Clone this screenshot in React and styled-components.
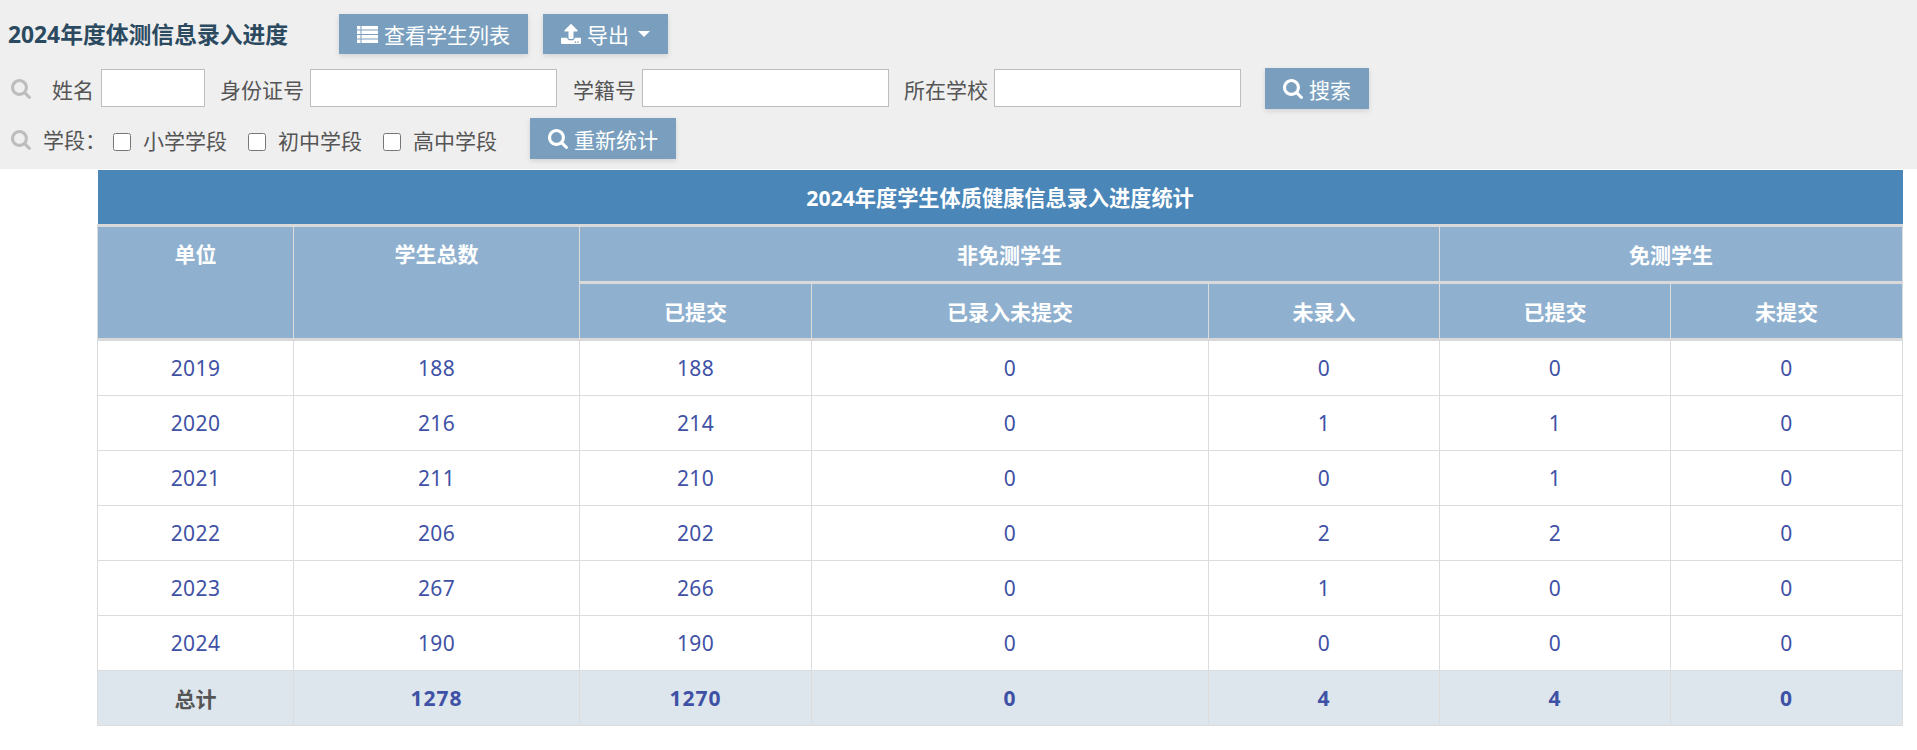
import React from "react";
import styled, { createGlobalStyle } from "styled-components";
import { FaUpload } from "react-icons/fa";

const FONT = `"Noto Sans", "Noto Sans CJK SC", sans-serif`;

const Global = createGlobalStyle`
  html, body { margin: 0; padding: 0; background: #fff; }
  body { font-family: ${FONT}; color: #555; }
  * { box-sizing: border-box; }
`;

const Toolbar = styled.header`
  background: #efefef;
  height: 169px;
  padding: 14px 0 0 8px;
  display: flex;
  flex-direction: column;
`;

const Row = styled.div`
  display: flex;
  align-items: center;
  height: ${(p) => p.$h}px;
  margin-bottom: ${(p) => p.$mb}px;
`;

const Title = styled.h1`
  margin: 0 51px 2px 0;
  width: 280px;
  font-size: 22.8px;
  font-weight: 700;
  color: #2b4a5f;
  white-space: nowrap;
`;

const Button = styled.button`
  display: inline-flex;
  align-items: center;
  height: ${(p) => p.$h || 41}px;
  padding: 0 18px;
  margin-left: ${(p) => p.$ml || 0}px;
  border: 0;
  background: #7a9fbe;
  color: #fff;
  font-family: ${FONT};
  font-size: 21px;
  box-shadow: 0 2px 5px rgba(0, 0, 0, 0.12);
  white-space: nowrap;
  svg { margin-right: 6px; flex: none; }
`;

const Caret = styled.span`
  width: 0;
  height: 0;
  margin-left: 9px;
  border-left: 6px solid transparent;
  border-right: 6px solid transparent;
  border-top: 6px solid #fff;
`;

const RowIconWrap = styled.span`
  display: inline-flex;
  color: #bdbdbd;
  margin: ${(p) => p.$mt || 0}px 0 0 3px;
  flex: none;
`;

const Label = styled.label`
  font-size: 21px;
  color: #555;
  white-space: nowrap;
  margin: ${(p) => p.$mt || 0}px ${(p) => p.$mr || 0}px 0 ${(p) => p.$ml}px;
`;

const TextInput = styled.input`
  width: ${(p) => p.$w}px;
  height: 38px;
  margin-bottom: 2px;
  border: 1px solid #bdbdbd;
  background: #fff;
  padding: 0 6px;
  outline: none;
`;

const Check = styled.input`
  width: 18px;
  height: 18px;
  margin: 6px 12px 0 ${(p) => p.$ml}px;
  flex: none;
`;

const Table = styled.table`
  margin: 1px 0 0 97px;
  width: 1806px;
  table-layout: fixed;
  border-collapse: collapse;
  text-align: center;
  font-size: 21px;
`;

const TitleCell = styled.th`
  height: 55px;
  padding: 0;
  background: #4a86b8;
  color: #fff;
  font-size: 21.2px;
  font-weight: 700;
  border: 0;
  border-bottom: 3px solid #d9d9d9;
`;

const HeadRow = styled.tr`
  height: 57px;
`;

const HeadCell = styled.th`
  padding: 0;
  background: #8fb1cf;
  color: #fff;
  font-weight: 700;
  border: 1px solid #dcdcdc;
  border-top: 3px solid #d9d9d9;
  border-bottom: 3px solid #d9d9d9;
  vertical-align: ${(p) => (p.$top ? "top" : "middle")};
  line-height: ${(p) => (p.$top ? "54px" : "inherit")};
`;

const DataRow = styled.tr`
  height: 55px;
  background: ${(p) => (p.$total ? "#dde5ed" : "#fff")};
  &:first-child { height: 56px; }
`;

const Cell = styled.td`
  padding: 0;
  border: 1px solid #dcdcdc;
  color: ${(p) => (p.$label ? "#555" : "#3f51a5")};
  font-weight: ${(p) => (p.$total ? 700 : 400)};
  letter-spacing: ${(p) => (p.$label ? 0 : p.$total ? 1 : 0.4)}px;
`;

function SearchIcon({ size = 20 }) {
  return (
    <svg width={size} height={size} viewBox="64 128 1664 1664" fill="currentColor">
      <path d="M1216 832q0-185-131.500-316.500t-316.500-131.500-316.500 131.500-131.500 316.500 131.500 316.500 316.500 131.500 316.500-131.500 131.500-316.500zm512 832q0 52-38 90t-90 38q-54 0-90-38l-343-342q-179 124-399 124-143 0-273.500-55.500t-225-150-150-225-55.500-273.500 55.500-273.500 150-225 225-150 273.500-55.500 273.500 55.500 225 150 150 225 55.500 273.500q0 220-124 399l343 343q37 37 37 90z" />
    </svg>
  );
}

function ListIcon() {
  const rows = [0, 4.5, 9, 13.5];
  return (
    <svg width="21" height="17" viewBox="0 0 21 17" fill="currentColor">
      {rows.map((y) => (
        <g key={y}>
          <rect x="0" y={y} width="3.5" height="3.5" />
          <rect x="4.5" y={y} width="16.5" height="3.5" />
        </g>
      ))}
    </svg>
  );
}

const WIDTHS = [196, 286, 232, 397, 231, 231, 232];

const ROWS = [
  ["2019", 188, 188, 0, 0, 0, 0],
  ["2020", 216, 214, 0, 1, 1, 0],
  ["2021", 211, 210, 0, 0, 1, 0],
  ["2022", 206, 202, 0, 2, 2, 0],
  ["2023", 267, 266, 0, 1, 0, 0],
  ["2024", 190, 190, 0, 0, 0, 0],
];

const TOTAL = ["总计", 1278, 1270, 0, 4, 4, 0];

export default function App() {
  return (
    <>
      <Global />
      <Toolbar>
        <Row $h={40} $mb={14}>
          <Title>2024年度体测信息录入进度</Title>
          <Button $h={40}>
            <ListIcon />
            查看学生列表
          </Button>
          <Button $h={40} $ml={15}>
            <FaUpload size={20} />
            导出
            <Caret />
          </Button>
        </Row>
        <Row $h={41} $mb={9}>
          <RowIconWrap><SearchIcon /></RowIconWrap>
          <Label $ml={21} $mr={7}>姓名</Label>
          <TextInput $w={104} />
          <Label $ml={15} $mr={6}>身份证号</Label>
          <TextInput $w={247} />
          <Label $ml={16} $mr={6}>学籍号</Label>
          <TextInput $w={247} />
          <Label $ml={15} $mr={6}>所在学校</Label>
          <TextInput $w={247} />
          <Button $ml={24}>
            <SearchIcon />
            搜索
          </Button>
        </Row>
        <Row $h={41} $mb={0}>
          <RowIconWrap $mt={3}><SearchIcon /></RowIconWrap>
          <Label $ml={12}>学段：</Label>
          <Check type="checkbox" $ml={7} />
          <Label $ml={0} $mt={2}>小学学段</Label>
          <Check type="checkbox" $ml={21} />
          <Label $ml={0} $mt={2}>初中学段</Label>
          <Check type="checkbox" $ml={21} />
          <Label $ml={0} $mt={2}>高中学段</Label>
          <Button $ml={33}>
            <SearchIcon />
            重新统计
          </Button>
        </Row>
      </Toolbar>
      <Table>
        <colgroup>
          {WIDTHS.map((w, i) => (
            <col key={i} style={{ width: w }} />
          ))}
        </colgroup>
        <thead>
          <tr>
            <TitleCell colSpan={7}>2024年度学生体质健康信息录入进度统计</TitleCell>
          </tr>
          <HeadRow>
            <HeadCell rowSpan={2} $top>单位</HeadCell>
            <HeadCell rowSpan={2} $top>学生总数</HeadCell>
            <HeadCell colSpan={3}>非免测学生</HeadCell>
            <HeadCell colSpan={2}>免测学生</HeadCell>
          </HeadRow>
          <HeadRow>
            <HeadCell>已提交</HeadCell>
            <HeadCell>已录入未提交</HeadCell>
            <HeadCell>未录入</HeadCell>
            <HeadCell>已提交</HeadCell>
            <HeadCell>未提交</HeadCell>
          </HeadRow>
        </thead>
        <tbody>
          {ROWS.map((r) => (
            <DataRow key={r[0]}>
              {r.map((v, i) => (
                <Cell key={i}>{v}</Cell>
              ))}
            </DataRow>
          ))}
          <DataRow $total>
            {TOTAL.map((v, i) => (
              <Cell key={i} $total $label={i === 0}>{v}</Cell>
            ))}
          </DataRow>
        </tbody>
      </Table>
    </>
  );
}
